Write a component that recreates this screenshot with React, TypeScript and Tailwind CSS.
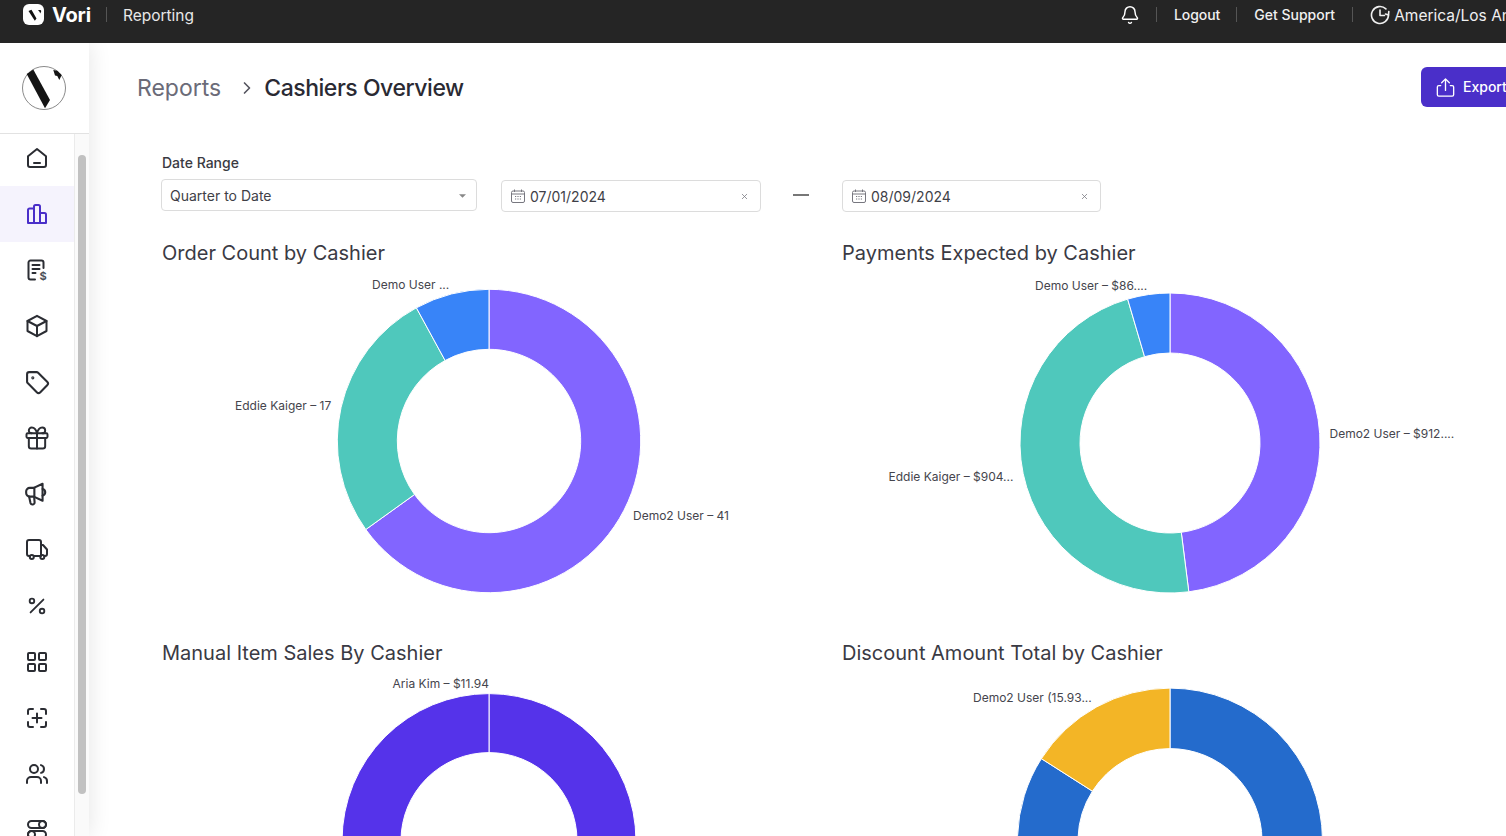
import React from "react";
import { Bell, Tag, Gift, Percent, LayoutGrid, Users, ChevronRight, X } from "lucide-react";

const pt = (cx: number, cy: number, r: number, a: number) => {
  const t = (a * Math.PI) / 180;
  return [cx + r * Math.sin(t), cy - r * Math.cos(t)];
};
const arc = (cx: number, cy: number, R: number, r: number, a0: number, a1: number) => {
  const [x0, y0] = pt(cx, cy, R, a0);
  const [x1, y1] = pt(cx, cy, R, a1);
  const [x2, y2] = pt(cx, cy, r, a1);
  const [x3, y3] = pt(cx, cy, r, a0);
  const large = a1 - a0 > 180 ? 1 : 0;
  return `M${x0} ${y0}A${R} ${R} 0 ${large} 1 ${x1} ${y1}L${x2} ${y2}A${r} ${r} 0 ${large} 0 ${x3} ${y3}Z`;
};

type Seg = { from: number; to: number; color: string };
type Lab = { x: number; y: number; text: string };

function Chart({ title, cx, cy, R, r, segs, labels }: { title: string; cx: number; cy: number; R: number; r: number; segs: Seg[]; labels: Lab[] }) {
  return (
    <div className="h-[400px]">
      <h2 className="h-7 text-xl leading-7 text-[#3a3a44]">{title}</h2>
      <svg width="660" height="372" className="block">
        {segs.map((s, i) => (
          <path key={i} d={arc(cx, cy, R, r, s.from, s.to)} fill={s.color} stroke="#ffffff" strokeWidth="1" />
        ))}
        {labels.map((l, i) => (
          <text key={i} x={l.x} y={l.y} className="fill-[#45454d] text-xs">
            {l.text}
          </text>
        ))}
      </svg>
    </div>
  );
}

const ic = { width: 24, height: 24, viewBox: "0 0 24 24", fill: "none", stroke: "currentColor", strokeWidth: 2, strokeLinecap: "round" as const, strokeLinejoin: "round" as const };

const HomeI = () => (
  <svg {...ic}>
    <path d="M3 10.2 12 3l9 7.2V19a2 2 0 0 1-2 2H5a2 2 0 0 1-2-2z" />
    <path d="M9 17h6" />
  </svg>
);
const BarsI = () => (
  <svg {...ic}>
    <path d="M3 21V8a1.5 1.5 0 0 1 1.5-1.5H9V21zM9 21V4.5A1.5 1.5 0 0 1 10.5 3h3A1.5 1.5 0 0 1 15 4.5V21zM15 21V11h4.5a1.5 1.5 0 0 1 1.5 1.5V21z" />
  </svg>
);
const ReceiptI = () => (
  <svg {...ic} className="overflow-visible">
    <path d="M18.5 10V4.5a2 2 0 0 0-2-2H5.5a2 2 0 0 0-2 2v15a2 2 0 0 0 2 2H10" />
    <path d="M7.5 7h7M7.5 11h7M7.5 15h3" />
    <text x="14.6" y="22" stroke="none" fill="#4b4f58" className="text-[11px] font-bold">$</text>
  </svg>
);
const BoxI = () => (
  <svg {...ic}>
    <path d="M12 1.8 21.5 7v10L12 22.2 2.5 17V7z" />
    <path d="M2.5 7 12 12l9.5-5M12 12v10.2" />
  </svg>
);
const MegaI = () => (
  <svg {...ic} viewBox="1.5 1.5 20.5 20.5" strokeWidth={1.8}>
    <path d="M16.5 3 9 6.5H5.5A3 3 0 0 0 2.5 9.5v1.5a3 3 0 0 0 3 3H9l7.5 3.5z" />
    <path d="M9.5 6.5v7.5M16.5 7.5a2.8 2.8 0 0 1 0 5.5M5 14l1.2 5.5a1.8 1.8 0 0 0 3.5-.6L9.3 14" />
  </svg>
);
const TruckI = () => (
  <svg {...ic}>
    <path d="M4.7 18H4a2 2 0 0 1-2-2V4a2 2 0 0 1 2-2h10a2 2 0 0 1 2 2v14H9" />
    <path d="M16 7h2l4 4.5V16a2 2 0 0 1-2 2h-.5" />
    <circle cx="6.8" cy="19" r="2" />
    <circle cx="17.3" cy="19" r="2" />
  </svg>
);
const ScanI = () => (
  <svg {...ic}>
    <path d="M3 8V5a2 2 0 0 1 2-2h3M16 3h3a2 2 0 0 1 2 2v3M21 16v3a2 2 0 0 1-2 2h-3M8 21H5a2 2 0 0 1-2-2v-3" />
    <path d="M12 7.5v9M7.5 12h9" />
  </svg>
);
const ToggleI = () => (
  <svg {...ic}>
    <rect x="3" y="3" width="18" height="7" rx="3.5" />
    <circle cx="17.5" cy="6.5" r="3.5" />
    <rect x="3" y="13" width="18" height="7" rx="3.5" />
    <circle cx="6.5" cy="16.5" r="3.5" />
  </svg>
);
const CalI = () => (
  <svg width="14" height="14" viewBox="0 0 14 14" fill="none" stroke="#77777f" strokeWidth="1">
    <rect x="0.5" y="2" width="13" height="11.5" rx="1.5" />
    <path d="M0.5 5h13M3.5 0.5V3M10.5 0.5V3" />
    <path d="M4 7.5h1.2M6.4 7.5h1.2M8.8 7.5H10M4 10h1.2M6.4 10h1.2M8.8 10H10" />
  </svg>
);

const nav = [
  { k: "home", el: <HomeI /> },
  { k: "bars", el: <BarsI />, active: true },
  { k: "receipt", el: <ReceiptI /> },
  { k: "box", el: <BoxI /> },
  { k: "tag", el: <Tag size={25} /> },
  { k: "gift", el: <Gift size={28} strokeWidth={1.7} /> },
  { k: "mega", el: <MegaI /> },
  { k: "truck", el: <TruckI /> },
  { k: "percent", el: <Percent size={22} /> },
  { k: "grid", el: <LayoutGrid size={24} /> },
  { k: "scan", el: <ScanI /> },
  { k: "users", el: <Users size={24} /> },
  { k: "toggle", el: <ToggleI /> },
];

function DateBox({ value, w }: { value: string; w: string }) {
  return (
    <div className={`mt-px flex h-8 items-center rounded-sm border border-[#dcdcdc] pl-[9px] pr-[11px] ${w}`}>
      <CalI />
      <span className="ml-[5px] pt-0.5 text-sm text-[#3f3f47]">{value}</span>
      <X size={9} className="ml-auto text-[#77777f]" strokeWidth={2} />
    </div>
  );
}

export default function App() {
  return (
    <div className="flex h-screen w-full flex-col overflow-hidden bg-white font-[family-name:Inter,sans-serif]">
      <header className="relative z-20 h-[43px] shrink-0 overflow-hidden bg-[#252525] text-white">
        <div className="flex h-[29px] w-[1600px] items-center whitespace-nowrap pl-[23px]">
          <div className="flex w-[1097px] items-center">
            <svg width="21" height="21" viewBox="0 0 21 21">
              <rect width="21" height="21" rx="6" fill="#ffffff" />
              <path d="M5.5 7 8.5 5.8 13.5 14.5 11.8 16.8z" fill="#111111" />
              <path d="M15 6h2.5l.8 1-1 2.5-.8-1.8z" fill="#111111" />
            </svg>
            <span className="ml-2 text-xl leading-none font-bold tracking-[-0.01em]">Vori</span>
            <span className="ml-[15px] h-[15px] w-px bg-[#555555]" />
            <span className="ml-4 pt-0.5 text-[15.5px] text-[#e8e8e8]">Reporting</span>
          </div>
          <Bell size={20} strokeWidth={1.75} />
          <span className="ml-[16px] h-[15px] w-px bg-[#555555]" />
          <span className="ml-[17px] text-sm font-medium tracking-[-0.005em] text-[#f0f0f0]">Logout</span>
          <span className="ml-[16px] h-[15px] w-px bg-[#555555]" />
          <span className="ml-[17px] text-sm font-medium text-[#f0f0f0]">Get Support</span>
          <span className="ml-[17px] h-[15px] w-px bg-[#555555]" />
          <svg className="ml-[17px]" width="20" height="20" viewBox="0 0 20 20" fill="none" stroke="#f0f0f0" strokeWidth="1.6" strokeLinecap="round" strokeLinejoin="round">
            <path d="M18.5 10a8.5 8.5 0 1 1-2.6-6.1" />
            <path d="M10 5v5.5h4.5M18.8 6.5l-.3 3.5-3-1" />
          </svg>
          <span className="ml-1 pt-0.5 text-[15.5px] text-[#f0f0f0]">America/Los Angeles</span>
        </div>
      </header>

      <div className="flex min-h-0 flex-1">
        <aside className="relative z-10 flex w-[89px] shrink-0 flex-col bg-white shadow-[0_0_22px_rgba(0,0,0,0.11)]">
          <div className="flex h-[91px] shrink-0 items-center justify-center border-b border-[#e2e2e2] pr-px">
            <svg width="44" height="44" viewBox="0 0 44 44">
              <circle cx="22" cy="22" r="21.5" fill="#ffffff" stroke="#8a8a8a" strokeWidth="1" />
              <path d="M4.7 8 11.3 3.6 28 34 23 42.3z" fill="#141414" />
              <path d="M31.3 4 35.3 4.7 39.7 9 37.3 14 35.3 10 33 9.5z" fill="#141414" />
            </svg>
          </div>
          <div className="flex min-h-0 flex-1">
            <nav className="w-[74px] shrink-0 overflow-hidden text-[#2b2d33]">
              <div className="-mt-1">
                {nav.map((n) => (
                  <div key={n.k} className={`flex h-14 items-center justify-center ${n.active ? "bg-[#f5f3fd] text-[#4a2fc9]" : ""}`}>
                    {n.el}
                  </div>
                ))}
              </div>
            </nav>
            <div className="w-[15px] shrink-0 border-l border-[#ebebeb] bg-[#fafafa] pl-[3px] pt-[21px]">
              <div className="h-[639px] w-2 rounded bg-[#c1c1c1]" />
            </div>
          </div>
        </aside>

        <main className="min-w-0 flex-1 overflow-hidden">
          <div className="flex h-20 w-[1500px] items-center pl-12 pt-2">
            <div className="flex w-[1284px] items-center pt-0.5 text-[23px]">
              <span className="text-[#6b6b78]">Reports</span>
              <ChevronRight size={20} strokeWidth={2} className="ml-4 text-[#55555f]" />
              <span className="ml-[7px] font-medium tracking-[-0.02em] text-[#2a2a33]">Cashiers Overview</span>
            </div>
            <div className="flex h-10 w-[120px] shrink-0 items-center rounded-md bg-[#4a2fc9] pl-[13px] text-sm font-medium text-white">
              <svg width="23" height="23" viewBox="0 0 24 24" fill="none" stroke="currentColor" strokeWidth="1.4" strokeLinecap="round" strokeLinejoin="round">
                <path d="M7 10H5a1.5 1.5 0 0 0-1.5 1.5v8A1.5 1.5 0 0 0 5 21h14a1.5 1.5 0 0 0 1.5-1.5v-8A1.5 1.5 0 0 0 19 10h-2" />
                <path d="M12 15V3M8 7l4-4 4 4" />
              </svg>
              <span className="ml-[6px]">Export</span>
            </div>
          </div>

          <div className="pl-[72px] pt-[29px]">
            <div className="pl-px text-sm leading-[22px] font-medium text-[#3a3a42]">Date Range</div>
            <div className="mt-[5px] flex items-start">
              <div className="flex h-8 w-[316px] items-center rounded-sm border border-[#dcdcdc] pl-2 pr-[10px] pt-0.5 text-sm text-[#3f3f47]">
                Quarter to Date
                <svg className="ml-auto" width="7" height="4" viewBox="0 0 8 4">
                  <path d="M0 0h8L4 4z" fill="#888888" />
                </svg>
              </div>
              <div className="ml-6">
                <DateBox value="07/01/2024" w="w-[260px]" />
              </div>
              <div className="ml-8 mt-[15px] h-0.5 w-4 bg-[#777777]" />
              <div className="ml-[33px]">
                <DateBox value="08/09/2024" w="w-[259px]" />
              </div>
            </div>
          </div>

          <div className="mt-[27px] grid w-[1433px] grid-cols-2 pl-[73px]">
            <Chart
              title="Order Count by Cashier"
              cx={327} cy={174} R={151.7} r={91.7}
              segs={[
                { from: 0, to: 234.3, color: "#8265ff" },
                { from: 234.3, to: 331.4, color: "#4fc8bc" },
                { from: 331.4, to: 360, color: "#3884f8" },
              ]}
              labels={[
                { x: 210, y: 22, text: "Demo User ..." },
                { x: 73, y: 143, text: "Eddie Kaiger – 17" },
                { x: 471, y: 253, text: "Demo2 User – 41" },
              ]}
            />
            <Chart
              title="Payments Expected by Cashier"
              cx={328} cy={176} R={150} r={90}
              segs={[
                { from: 0, to: 172.8, color: "#8265ff" },
                { from: 172.8, to: 343.6, color: "#4fc8bc" },
                { from: 343.6, to: 360, color: "#3884f8" },
              ]}
              labels={[
                { x: 193, y: 23, text: "Demo User – $86...." },
                { x: 487.5, y: 171, text: "Demo2 User – $912...." },
                { x: 46.5, y: 214, text: "Eddie Kaiger – $904..." },
              ]}
            />
            <Chart
              title="Manual Item Sales By Cashier"
              cx={327} cy={173.6} R={147} r={88}
              segs={[
                { from: 0, to: 180, color: "#5533ea" },
                { from: 180, to: 360, color: "#5533ea" },
              ]}
              labels={[{ x: 230.5, y: 21, text: "Aria Kim – $11.94" }]}
            />
            <Chart
              title="Discount Amount Total by Cashier"
              cx={328} cy={173.6} R={152.5} r={92}
              segs={[
                { from: 0, to: 180, color: "#246bcc" },
                { from: 180, to: 302.5, color: "#246bcc" },
                { from: 302.5, to: 360, color: "#f3b526" },
              ]}
              labels={[{ x: 131, y: 35, text: "Demo2 User (15.93..." }]}
            />
          </div>
        </main>
      </div>
    </div>
  );
}
